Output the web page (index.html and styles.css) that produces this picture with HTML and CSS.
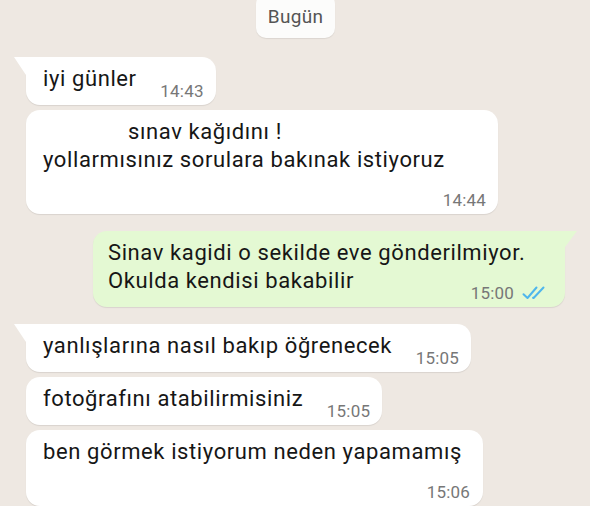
FILE: index.html
```html
<!DOCTYPE html>
<html lang="tr">
<head>
<meta charset="utf-8">
<title>Sohbet</title>
<link rel="stylesheet" href="styles.css">
</head>
<body>
<div class="chat">
  <div class="day">Bugün</div>

  <div class="msg in tail">
    <div class="body">iyi günler<span class="spacer"></span></div>
    <div class="meta"><span class="time">14:43</span></div>
  </div>

  <div class="msg in">
    <div class="body"><span class="hidden-name"></span>sınav kağıdını !<br>yollarmısınız sorulara bakınak istiyoruz<span class="spacer"></span></div>
    <div class="meta"><span class="time">14:44</span></div>
  </div>

  <div class="msg out tail">
    <div class="body">Sinav kagidi o sekilde eve gönderilmiyor. Okulda kendisi bakabilir<span class="spacer"></span></div>
    <div class="meta"><span class="time">15:00</span>
      <svg class="ticks" width="26" height="14" viewBox="0 0 26 14" aria-hidden="true">
        <path d="M1.5 8.2 L5.5 12 L14.5 1.5" fill="none" stroke="#4fb6ec" stroke-width="2" stroke-linecap="round" stroke-linejoin="round"/>
        <path d="M11 11.8 L11.6 12 L21.5 1.5" fill="none" stroke="#4fb6ec" stroke-width="2" stroke-linecap="round" stroke-linejoin="round"/>
      </svg>
    </div>
  </div>

  <div class="msg in tail">
    <div class="body">yanlışlarına nasıl bakıp öğrenecek<span class="spacer"></span></div>
    <div class="meta"><span class="time">15:05</span></div>
  </div>

  <div class="msg in">
    <div class="body">fotoğrafını atabilirmisiniz<span class="spacer"></span></div>
    <div class="meta"><span class="time">15:05</span></div>
  </div>

  <div class="msg in narrow">
    <div class="body">ben görmek istiyorum neden yapamamış<span class="spacer"></span></div>
    <div class="meta"><span class="time">15:06</span></div>
  </div>
</div>
</body>
</html>
```

FILE: styles.css
```css
* { box-sizing: border-box; }

html, body {
  margin: 0;
  padding: 0;
  background: #eee8e2;
  overflow: hidden;
}

.chat {
  display: flex;
  flex-direction: column;
  align-items: flex-start;
  padding: 0 25px 0 26px;
  font-family: Roboto, "Noto Sans", sans-serif;
  color: #161616;
}

.day {
  align-self: center;
  margin-top: -6px;
  height: 44px;
  padding: 11px 12px 0;
  background: #fcfcfb;
  border-radius: 10px;
  box-shadow: 0 1px 1px rgba(0, 0, 0, 0.08);
  font-size: 19px;
  letter-spacing: 0.3px;
  line-height: 24px;
  color: #555;
}

.msg {
  position: relative;
  display: grid;
  max-width: 472px;
  margin-top: 5px;
  padding: 8px 12px 12px 17px;
  background: #fff;
  border-radius: 14px;
  box-shadow: 0 1px 1px rgba(0, 0, 0, 0.09);
  font-size: 22px;
  letter-spacing: 0.6px;
  line-height: 28px;
}

.msg.tail { margin-top: 17px; }
.day + .msg { margin-top: 19px; }

.msg.in.tail { border-top-left-radius: 0; }

.msg.in.tail::before {
  content: "";
  position: absolute;
  left: -12px;
  top: 0;
  width: 12px;
  height: 18px;
  background: #fff;
  clip-path: polygon(0 0, 100% 0, 100% 100%, 90% 90%);
}

.msg.out {
  align-self: flex-end;
  padding-left: 15px;
  padding-right: 17px;
  background: #e4f9d3;
}

.msg.out.tail { border-top-right-radius: 0; }

.msg.out.tail::before {
  content: "";
  position: absolute;
  right: -12px;
  top: 0;
  width: 12px;
  height: 16px;
  background: #e4f9d3;
  clip-path: polygon(0 0, 100% 0, 10% 90%, 0 100%);
}

.msg.narrow { max-width: 457px; padding-right: 13px; }

.body,
.meta { grid-area: 1 / 1; }

.spacer {
  display: inline-block;
  width: 67px;
  height: 1px;
}

.out .spacer { width: 100px; }

.hidden-name {
  display: inline-block;
  width: 85px;
  height: 1px;
}

.meta {
  justify-self: end;
  align-self: end;
  margin-bottom: -7px;
  display: flex;
  align-items: center;
  gap: 8px;
  font-size: 17px;
  letter-spacing: 0.2px;
  line-height: 18px;
  color: #777;
}

.ticks { display: block; }
```
